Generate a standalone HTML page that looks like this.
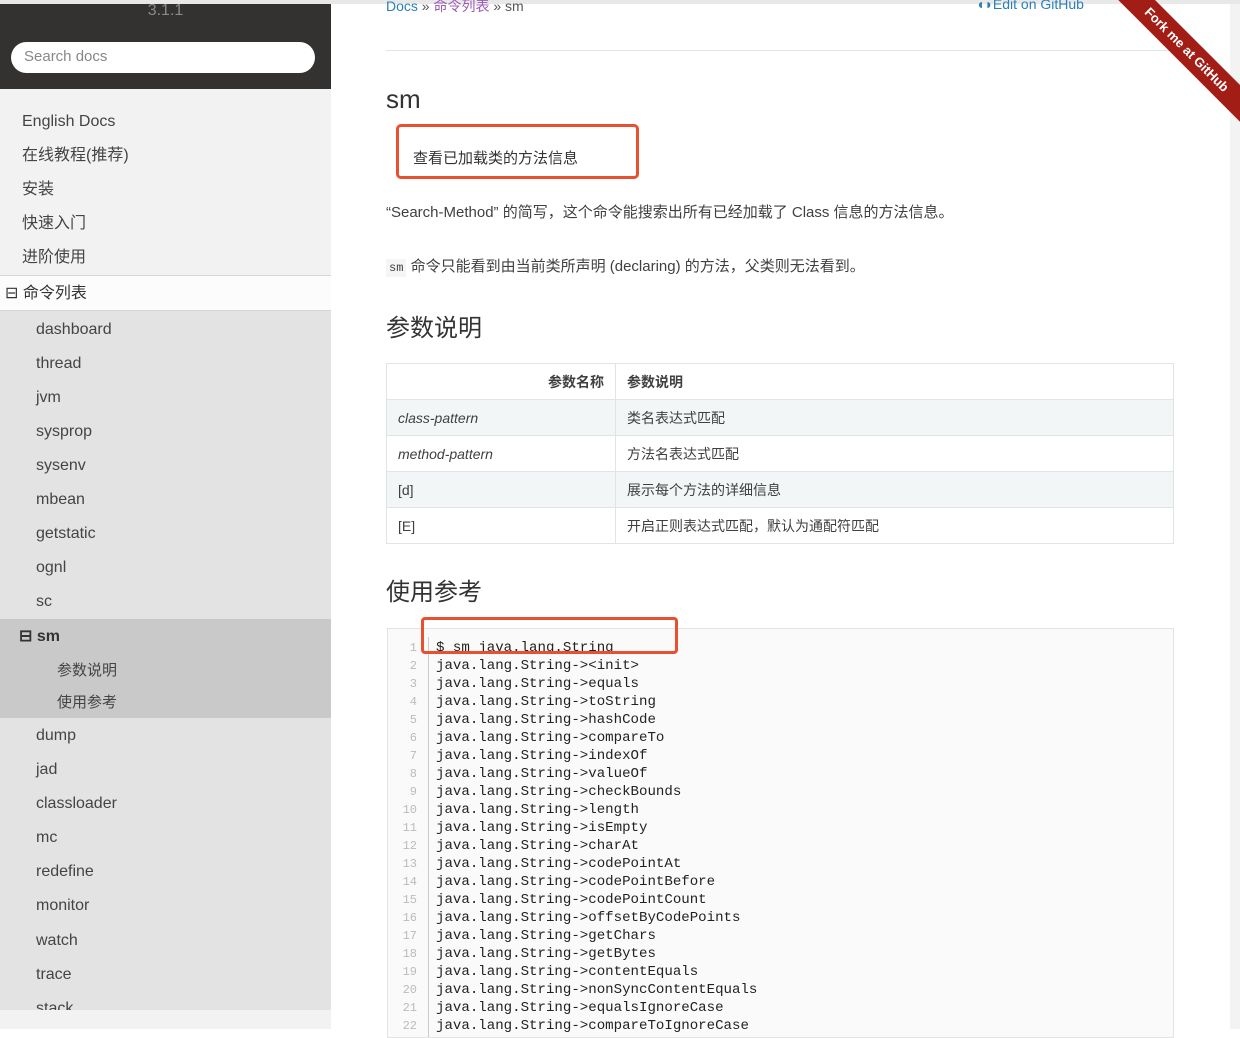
<!DOCTYPE html>
<html><head><meta charset="utf-8"><style>
*{margin:0;padding:0;box-sizing:border-box}
body{width:1240px;height:1029px;overflow:hidden;background:#fff;font-family:"Liberation Sans","Noto Sans CJK SC",sans-serif;color:#404040;position:relative}
.abs{position:absolute}
#side{left:0;top:0;width:331px;height:1029px;background:#f2f2f2}
#dark{left:0;top:0;width:331px;height:89px;background:#343131}
.ver{left:0;width:331px;top:2px;text-align:center;color:#8a8a8a;font-size:16px}
.search{left:11px;top:42px;width:304px;height:31px;border-radius:16px;background:#fff;color:#888;font-size:15px;padding:6px 13px}
.it{position:absolute;font-size:16px;color:#444;line-height:20px}
.main{left:331px;top:0;width:899px;height:1029px;background:#fff}
.code{font-family:"Liberation Mono",monospace;font-size:14.1px;line-height:18px;color:#222;white-space:pre}
.ln{font-family:"Liberation Mono",monospace;font-size:12px;line-height:18px;color:#bbb;text-align:right;white-space:pre}
table{border-collapse:collapse;font-size:14px}
td,th{border:1px solid #e1e4e5;height:36px;padding:0 11px}
</style></head><body>
<div class="abs" id="side"></div>
<div class="abs" id="dark"></div>
<div class="abs ver">3.1.1</div>
<div class="abs search">Search docs</div>
<div class="it" style="left:22px;top:112px">English Docs</div>
<div class="it" style="left:22px;top:146px">在线教程(推荐)</div>
<div class="it" style="left:22px;top:180px">安装</div>
<div class="it" style="left:22px;top:214px">快速入门</div>
<div class="it" style="left:22px;top:248px">进阶使用</div>
<div class="abs" style="left:0;top:275px;width:331px;height:36px;background:#fcfcfc;border-top:1px solid #d6d6d6;border-bottom:1px solid #d6d6d6"></div>
<div class="it" style="left:5px;top:284px;font-size:16px;color:#333">⊟ 命令列表</div>
<div class="abs" style="left:0;top:311px;width:331px;height:699px;background:#e3e3e3"></div>
<div class="abs" style="left:0;top:619px;width:331px;height:99px;background:#c9c9c9"></div>
<div class="it" style="left:36px;top:320px">dashboard</div>
<div class="it" style="left:36px;top:354px">thread</div>
<div class="it" style="left:36px;top:388px">jvm</div>
<div class="it" style="left:36px;top:422px">sysprop</div>
<div class="it" style="left:36px;top:456px">sysenv</div>
<div class="it" style="left:36px;top:490px">mbean</div>
<div class="it" style="left:36px;top:524px">getstatic</div>
<div class="it" style="left:36px;top:558px">ognl</div>
<div class="it" style="left:36px;top:592px">sc</div>
<div class="it" style="left:19px;top:627px;font-weight:bold;color:#333">⊟ sm</div>
<div class="it" style="left:57px;top:661px;font-size:15px">参数说明</div>
<div class="it" style="left:57px;top:693px;font-size:15px">使用参考</div>
<div class="it" style="left:36px;top:726px">dump</div>
<div class="it" style="left:36px;top:760px">jad</div>
<div class="it" style="left:36px;top:794px">classloader</div>
<div class="it" style="left:36px;top:828px">mc</div>
<div class="it" style="left:36px;top:862px">redefine</div>
<div class="it" style="left:36px;top:896px">monitor</div>
<div class="it" style="left:36px;top:931px">watch</div>
<div class="it" style="left:36px;top:965px">trace</div>
<div class="it" style="left:36px;top:999px">stack</div>
<div class="abs" style="left:0;top:1010px;width:331px;height:19px;background:#f2f2f2"></div>

<div class="abs main"></div>
<div class="abs" style="left:1230px;top:0;width:10px;height:1029px;background:#f3f3f3"></div>
<div class="abs" style="left:0;top:0;width:1240px;height:4px;background:#e8e8e8"></div>
<div class="abs" style="left:386px;top:-4px;font-size:14px;color:#2980b9">Docs <span style="color:#555">»</span> <span style="color:#9b59b6">命令列表</span> <span style="color:#555">» sm</span></div>
<div class="abs" style="left:976px;top:-4px;font-size:14px;color:#2980b9">◖◗Edit on GitHub</div>
<div class="abs" style="left:386px;top:50px;width:788px;height:1px;background:#e1e4e5"></div>
<div class="abs" style="width:200px;height:26px;background:#a31d17;transform:rotate(45deg);transform-origin:left top;color:#fff;font-size:13px;font-weight:bold;line-height:26px;text-align:center;left:1125px;top:-30px">Fork me at GitHub</div>
<div class="abs" style="left:386px;top:84px;font-size:26px;color:#333">sm</div>
<div class="abs" style="left:396px;top:124px;width:243px;height:55px;border:3px solid #e8502f;border-radius:5px"></div>
<div class="abs" style="left:413px;top:147px;font-size:15px;color:#333">查看已加载类的方法信息</div>
<div class="abs" style="left:386px;top:201px;font-size:15px">“Search-Method” 的简写，这个命令能搜索出所有已经加载了 Class 信息的方法信息。</div>
<div class="abs" style="left:386px;top:255px;font-size:15px"><span style="font-family:'Liberation Mono',monospace;font-size:12px;background:#f5f5f5;padding:2px 3px">sm</span> 命令只能看到由当前类所声明 (declaring) 的方法，父类则无法看到。</div>
<div class="abs" style="left:386px;top:308px;font-size:24px;color:#333">参数说明</div>
<table class="abs" style="left:386px;top:363px;width:788px">
<tr><th style="width:229px;text-align:right">参数名称</th><th style="text-align:left">参数说明</th></tr>
<tr style="background:#f3f6f6"><td><i>class-pattern</i></td><td>类名表达式匹配</td></tr>
<tr><td><i>method-pattern</i></td><td>方法名表达式匹配</td></tr>
<tr style="background:#f3f6f6"><td>[d]</td><td>展示每个方法的详细信息</td></tr>
<tr><td>[E]</td><td>开启正则表达式匹配，默认为通配符匹配</td></tr>
</table>
<div class="abs" style="left:386px;top:572px;font-size:24px;color:#333">使用参考</div>
<div class="abs" style="left:387px;top:628px;width:787px;height:410px;border:1px solid #e1e4e5;background:#fafafa"></div>
<div class="abs" style="left:428px;top:637px;width:1px;height:400px;background:#ccc"></div>
<div class="abs ln" style="left:395px;top:639px;width:22px">1
2
3
4
5
6
7
8
9
10
11
12
13
14
15
16
17
18
19
20
21
22</div>
<div class="abs code" style="left:436px;top:639px">$ sm java.lang.String
java.lang.String-&gt;&lt;init&gt;
java.lang.String-&gt;equals
java.lang.String-&gt;toString
java.lang.String-&gt;hashCode
java.lang.String-&gt;compareTo
java.lang.String-&gt;indexOf
java.lang.String-&gt;valueOf
java.lang.String-&gt;checkBounds
java.lang.String-&gt;length
java.lang.String-&gt;isEmpty
java.lang.String-&gt;charAt
java.lang.String-&gt;codePointAt
java.lang.String-&gt;codePointBefore
java.lang.String-&gt;codePointCount
java.lang.String-&gt;offsetByCodePoints
java.lang.String-&gt;getChars
java.lang.String-&gt;getBytes
java.lang.String-&gt;contentEquals
java.lang.String-&gt;nonSyncContentEquals
java.lang.String-&gt;equalsIgnoreCase
java.lang.String-&gt;compareToIgnoreCase</div>
<div class="abs" style="left:421px;top:617px;width:257px;height:37px;border:3px solid #e8502f;border-radius:4px"></div>
</body></html>
